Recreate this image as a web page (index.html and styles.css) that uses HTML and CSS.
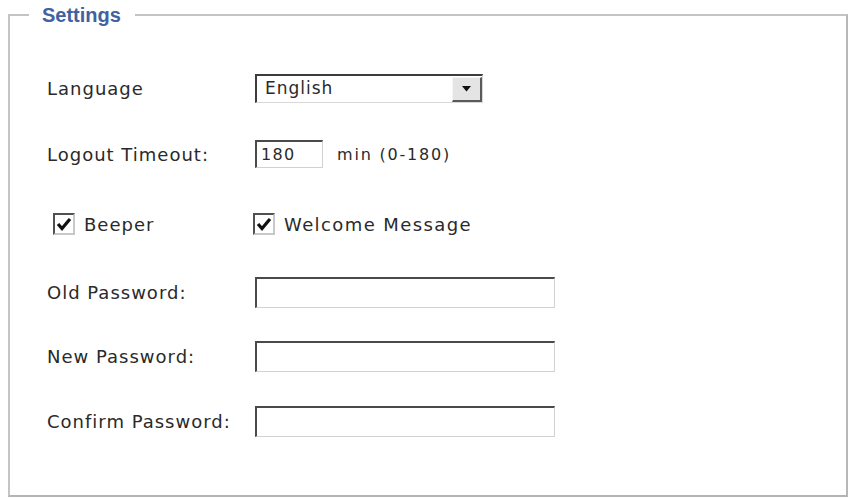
FILE: index.html
```html
<!DOCTYPE html>
<html lang="en">
<head>
<meta charset="utf-8">
<title>Settings</title>
<link rel="stylesheet" href="styles.css">
</head>
<body>
<fieldset class="settings">
  <legend class="settings-title">Settings</legend>
  <div class="form">
    <div class="row">
      <span class="label">Language</span>
      <div class="select">
        <span class="select-value">English</span>
        <span class="select-btn"><svg width="9" height="6" viewBox="0 0 9 6"><path d="M0 0H9L4.5 5.5Z" fill="#111"/></svg></span>
      </div>
    </div>
    <div class="row">
      <span class="label">Logout Timeout:</span>
      <div class="inline">
        <span class="input input-short">180</span>
        <span class="hint">min (0-180)</span>
      </div>
    </div>
    <div class="row row-checks">
      <span class="check check-first"><span class="box"><svg width="16" height="14" viewBox="0 0 16 14"><path d="M2 7L6 11.5L14 2" fill="none" stroke="#111" stroke-width="3.2"/></svg></span><span class="check-label">Beeper</span></span>
      <span class="check check-second"><span class="box"><svg width="16" height="14" viewBox="0 0 16 14"><path d="M2 7L6 11.5L14 2" fill="none" stroke="#111" stroke-width="3.2"/></svg></span><span class="check-label">Welcome Message</span></span>
    </div>
    <div class="row">
      <span class="label">Old Password:</span>
      <span class="input input-long"></span>
    </div>
    <div class="row">
      <span class="label">New Password:</span>
      <span class="input input-long"></span>
    </div>
    <div class="row">
      <span class="label">Confirm Password:</span>
      <span class="input input-long"></span>
    </div>
  </div>
</fieldset>
</body>
</html>
```
FILE: styles.css
```css
html, body {
  margin: 0;
  padding: 0;
  background: #ffffff;
}
body {
  font-family: "DejaVu Sans", Verdana, sans-serif;
  color: #2a2a2a;
}
.settings {
  margin: 0 3px 2px 8px;
  padding: 42px 0 58px 37px;
  border: 2px solid #c4c4c4;
  border-right-color: #b8b8b8;
  border-bottom-color: #b4b4b4;
  min-width: 0;
}
.settings-title {
  margin-left: -18px;
  padding: 0 14px 0 13px;
  font-family: "Liberation Sans", Arial, sans-serif;
  font-weight: bold;
  font-size: 20px;
  line-height: 30px;
  color: #41619f;
}
.form {
  display: grid;
  grid-template-rows: 66px 68px 70px 64px 65px 32px;
}
.row {
  display: grid;
  grid-template-columns: 208px auto;
  align-items: center;
  height: 32px;
  align-self: start;
}
.label {
  font-size: 18px;
  letter-spacing: 1px;
  white-space: nowrap;
}
.select {
  box-sizing: border-box;
  width: 228px;
  height: 29px;
  display: flex;
  align-items: stretch;
  border-top: 2px solid #3c3c3c;
  border-left: 2px solid #3c3c3c;
  border-right: 1px solid #d8d8d8;
  border-bottom: 1px solid #d8d8d8;
  background: #fff;
}
.select-value {
  flex: 1;
  font-size: 17px;
  letter-spacing: 1px;
  padding-left: 8px;
  line-height: 25px;
}
.select-btn {
  box-sizing: border-box;
  width: 30px;
  display: flex;
  align-items: center;
  justify-content: center;
  background: #e4e4e4;
  border-top: 1px solid #f4f4f4;
  border-left: 1px solid #f4f4f4;
  border-right: 2px solid #5a5a5a;
  border-bottom: 2px solid #5a5a5a;
  margin: 1px 0 0 0;
}
.inline {
  display: flex;
  align-items: center;
  gap: 14px;
}
.input {
  box-sizing: border-box;
  display: block;
  height: 30px;
  background: #fff;
  border-top: 2px solid #4a4a4a;
  border-left: 2px solid #4a4a4a;
  border-right: 1px solid #d2d2d2;
  border-bottom: 1px solid #d2d2d2;
}
.input-short {
  width: 68px;
  height: 28px;
  font-size: 16px;
  letter-spacing: 1.3px;
  padding-left: 4px;
  line-height: 25px;
}
.input-long {
  width: 300px;
  height: 31px;
}
.hint {
  font-size: 16px;
  letter-spacing: 1.8px;
}
.row-checks {
  grid-template-columns: 206px auto;
  height: 36px;
}
.check {
  display: flex;
  align-items: center;
  gap: 9px;
  font-size: 18px;
  letter-spacing: 1px;
  white-space: nowrap;
}
.check-first {
  margin-left: 6px;
}
.check-second .check-label {
  letter-spacing: 1.4px;
}
.box {
  box-sizing: border-box;
  width: 22px;
  height: 22px;
  display: flex;
  align-items: center;
  justify-content: center;
  background: #fff;
  border-top: 2px solid #505050;
  border-left: 2px solid #505050;
  border-right: 2px solid #c8c8c8;
  border-bottom: 2px solid #c8c8c8;
}
.check-label {
  font-size: 18px;
}
```
